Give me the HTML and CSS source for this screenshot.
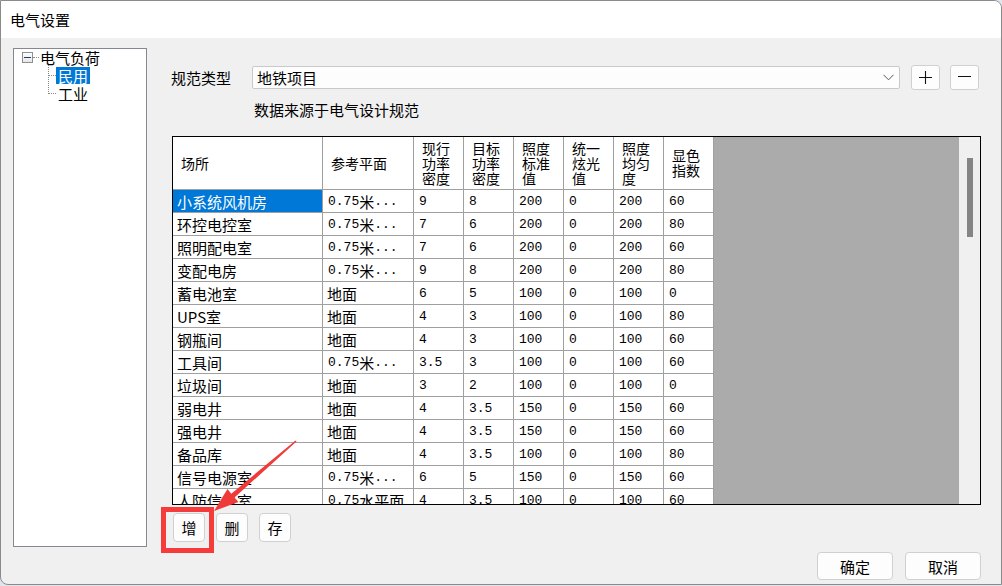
FILE: index.html
```html
<!DOCTYPE html>
<html lang="zh">
<head>
<meta charset="utf-8">
<title>电气设置</title>
<link rel="stylesheet" href="styles.css">
</head>
<body>
<div class="window">
  <div class="titlebar">电气设置</div>
  <div class="content">
    <div class="main">
      <div class="tree">
        <div class="tree-root">
          <span class="expander"></span>
          <span class="dots"></span>
          <span class="root-label">电气负荷</span>
        </div>
        <div class="tree-children">
          <div class="tree-item"><span class="item-label selected">民用</span></div>
          <div class="tree-item"><span class="item-label">工业</span></div>
        </div>
      </div>
      <div class="panel">
        <div class="type-row">
          <span class="type-label">规范类型</span>
          <div class="combo">
            <span>地铁项目</span>
            <svg class="chevron" width="11" height="7" viewBox="0 0 11 7"><path d="M0.5 0.8 L5.5 5.8 L10.5 0.8" fill="none" stroke="#555" stroke-width="1"/></svg>
          </div>
          <button class="sq-btn" aria-label="增加"><svg width="13" height="13" viewBox="0 0 13 13"><path d="M6.5 0 V13 M0 6.5 H13" stroke="#111" stroke-width="1.1"/></svg></button>
          <button class="sq-btn minus" aria-label="删除"><svg width="13" height="13" viewBox="0 0 13 13"><path d="M0 5.5 H13" stroke="#111" stroke-width="1.1"/></svg></button>
        </div>
        <div class="source">数据来源于电气设计规范</div>
        <div class="grid-frame">
          <div class="grid">
            <div class="c hd">场所</div>
            <div class="c hd">参考平面</div>
            <div class="c hd">现行<br>功率<br>密度</div>
            <div class="c hd">目标<br>功率<br>密度</div>
            <div class="c hd">照度<br>标准<br>值</div>
            <div class="c hd">统一<br>炫光<br>值</div>
            <div class="c hd">照度<br>均匀<br>度</div>
            <div class="c hd">显色<br>指数</div>

            <div class="c sel">小系统风机房</div><div class="c m">0.75<span class="cj">米</span>...</div><div class="c m">9</div><div class="c m">8</div><div class="c m">200</div><div class="c m">0</div><div class="c m">200</div><div class="c m">60</div>
            <div class="c">环控电控室</div><div class="c m">0.75<span class="cj">米</span>...</div><div class="c m">7</div><div class="c m">6</div><div class="c m">200</div><div class="c m">0</div><div class="c m">200</div><div class="c m">80</div>
            <div class="c">照明配电室</div><div class="c m">0.75<span class="cj">米</span>...</div><div class="c m">7</div><div class="c m">6</div><div class="c m">200</div><div class="c m">0</div><div class="c m">200</div><div class="c m">60</div>
            <div class="c">变配电房</div><div class="c m">0.75<span class="cj">米</span>...</div><div class="c m">9</div><div class="c m">8</div><div class="c m">200</div><div class="c m">0</div><div class="c m">200</div><div class="c m">80</div>
            <div class="c">蓄电池室</div><div class="c">地面</div><div class="c m">6</div><div class="c m">5</div><div class="c m">100</div><div class="c m">0</div><div class="c m">100</div><div class="c m">0</div>
            <div class="c">UPS室</div><div class="c">地面</div><div class="c m">4</div><div class="c m">3</div><div class="c m">100</div><div class="c m">0</div><div class="c m">100</div><div class="c m">80</div>
            <div class="c">钢瓶间</div><div class="c">地面</div><div class="c m">4</div><div class="c m">3</div><div class="c m">100</div><div class="c m">0</div><div class="c m">100</div><div class="c m">60</div>
            <div class="c">工具间</div><div class="c m">0.75<span class="cj">米</span>...</div><div class="c m">3.5</div><div class="c m">3</div><div class="c m">100</div><div class="c m">0</div><div class="c m">100</div><div class="c m">60</div>
            <div class="c">垃圾间</div><div class="c">地面</div><div class="c m">3</div><div class="c m">2</div><div class="c m">100</div><div class="c m">0</div><div class="c m">100</div><div class="c m">0</div>
            <div class="c">弱电井</div><div class="c">地面</div><div class="c m">4</div><div class="c m">3.5</div><div class="c m">150</div><div class="c m">0</div><div class="c m">150</div><div class="c m">60</div>
            <div class="c">强电井</div><div class="c">地面</div><div class="c m">4</div><div class="c m">3.5</div><div class="c m">150</div><div class="c m">0</div><div class="c m">150</div><div class="c m">60</div>
            <div class="c">备品库</div><div class="c">地面</div><div class="c m">4</div><div class="c m">3.5</div><div class="c m">100</div><div class="c m">0</div><div class="c m">100</div><div class="c m">80</div>
            <div class="c">信号电源室</div><div class="c m">0.75<span class="cj">米</span>...</div><div class="c m">6</div><div class="c m">5</div><div class="c m">150</div><div class="c m">0</div><div class="c m">150</div><div class="c m">60</div>
            <div class="c">人防信号室</div><div class="c m">0.75<span class="cj">水平面</span></div><div class="c m">4</div><div class="c m">3.5</div><div class="c m">100</div><div class="c m">0</div><div class="c m">100</div><div class="c m">60</div>
          </div>
          <div class="grid-empty"></div>
          <div class="vscroll"><div class="thumb"></div></div>
        </div>
        <div class="row-btns">
          <button class="btn small">增</button>
          <button class="btn small">删</button>
          <button class="btn small">存</button>
        </div>
      </div>
    </div>
    <div class="footer">
      <button class="btn wide">确定</button>
      <button class="btn wide">取消</button>
    </div>
  </div>
  <div class="highlight-box"></div>
  <svg class="arrow" width="1002" height="586" viewBox="0 0 1002 586">
    <polygon points="296.5,441.6 234.5,497.5 238.5,502 214,511 227.5,489 231.3,493.7 295.5,440.4" fill="#f03a3a"/>
  </svg>
</div>
</body>
</html>
```

FILE: styles.css
```css
* { box-sizing: border-box; }
html, body { margin: 0; padding: 0; }
body {
  width: 1002px;
  height: 586px;
  background: #dfe6ee;
  font-family: "Noto Sans CJK SC", "Liberation Sans", sans-serif;
  color: #000;
  overflow: hidden;
}
.window {
  position: relative;
  width: 1002px;
  height: 585px;
  background: #f0f0f0;
  border: 1px solid #8a8a8a;
  border-radius: 0 8px 0 8px;
  overflow: hidden;
}
.titlebar {
  height: 37px;
  background: #fff;
  padding-left: 9px;
  font-size: 15px;
  line-height: 37px;
}
.content {
  padding: 10px 20px 0 12px;
}
.main {
  display: flex;
  height: 499px;
}
.tree {
  width: 135px;
  height: 499px;
  background: #fff;
  border: 1px solid #848991;
  padding-top: 0;
  font-size: 15px;
}
.tree-root {
  display: flex;
  align-items: center;
  height: 17px;
  padding-left: 8px;
}
.expander {
  position: relative;
  width: 11px;
  height: 11px;
  border: 1px solid #8f8f8f;
  background: linear-gradient(#fdfdfd, #e8e8e8);
}
.expander::after {
  content: "";
  position: absolute;
  left: 1px;
  right: 1px;
  top: 4px;
  height: 1px;
  background: #1e3a7a;
}
.dots {
  width: 6px;
  border-top: 1px dotted #888;
}
.root-label {
  line-height: 17px;
  padding-left: 1px;
}
.tree-children {
  position: relative;
  margin-left: 34px;
}
.tree-children::before {
  content: "";
  position: absolute;
  left: 0;
  top: -3px;
  height: 29px;
  border-left: 1px dotted #888;
}
.tree-item {
  position: relative;
  height: 18px;
  padding-left: 8px;
  display: flex;
  align-items: center;
}
.tree-item::before {
  content: "";
  position: absolute;
  left: 0;
  top: 9px;
  width: 8px;
  border-top: 1px dotted #888;
}
.item-label {
  padding: 0 2px;
  line-height: 17px;
}
.item-label.selected {
  background: #0078d7;
  color: #fff;
}
.panel {
  margin-left: 24px;
  flex: 1;
  display: flex;
  flex-direction: column;
}
.type-row {
  display: flex;
  align-items: center;
  height: 25px;
  margin-top: 17px;
  margin-right: 2px;
}
.type-label {
  width: 81px;
  font-size: 15px;
}
.combo {
  flex: 1;
  height: 23px;
  background: #fdfdfd;
  border: 1px solid #c9c9c9;
  border-radius: 2px;
  display: flex;
  align-items: center;
  justify-content: space-between;
  padding: 0 5px 0 4px;
  font-size: 15px;
}
.chevron { display: block; }
.sq-btn {
  width: 29px;
  height: 25px;
  margin-left: 11px;
  padding: 0;
  background: #fdfdfd;
  border: 1px solid #d0d0d0;
  border-radius: 3px;
  display: flex;
  align-items: center;
  justify-content: center;
}
.sq-btn.minus { margin-left: 10px; }
.sq-btn svg { display: block; }
.source {
  margin: 10px 0 0 83px;
  height: 20px;
  line-height: 20px;
  font-size: 15px;
}
.grid-frame {
  margin: 16px 0 0 1px;
  width: 809px;
  height: 369px;
  border: 1px solid #000;
  display: flex;
  overflow: hidden;
}
.grid {
  display: grid;
  grid-template-columns: 150px 91px repeat(6, 50px);
  grid-auto-rows: 23px;
  grid-template-rows: 53px;
  align-content: start;
  width: 541px;
  background: #fff;
}
.c {
  border-right: 1px solid #a0a0a0;
  border-bottom: 1px solid #a0a0a0;
  display: flex;
  align-items: center;
  padding-left: 4px;
  white-space: nowrap;
  overflow: hidden;
  font-size: 15px;
  line-height: 17px;
  background: #fff;
}
.c.hd {
  padding-left: 8px;
  font-size: 14px;
  line-height: 15px;
}
.c.sel {
  background: #0078d7;
  color: #fff;
}
.c.m {
  font-family: "Liberation Mono", "Noto Sans CJK SC", monospace;
  font-size: 13px;
  padding-left: 5px;
}
.cj {
  font-family: "Noto Sans CJK SC", sans-serif;
  font-size: 15px;
}
.grid-empty {
  flex: 1;
  background: #ababab;
}
.vscroll {
  width: 21px;
  background: #f0f0f0;
  padding: 21px 0 0 8px;
}
.thumb {
  width: 6px;
  height: 79px;
  background: #858585;
}
.row-btns {
  display: flex;
  gap: 11px;
  margin: 8px 0 0 2px;
}
.btn {
  font-family: "Noto Sans CJK SC", sans-serif;
  font-size: 15px;
  background: #fdfdfd;
  border: 1px solid #d0d0d0;
  border-radius: 4px;
  padding: 0;
  color: #000;
}
.btn.small {
  width: 32px;
  height: 29px;
}
.footer {
  display: flex;
  justify-content: flex-end;
  gap: 12px;
  margin-top: 5px;
}
.btn.wide {
  width: 76px;
  height: 28px;
}
.highlight-box {
  position: absolute;
  left: 160px;
  top: 506px;
  width: 53px;
  height: 46px;
  border: 5px solid #f53b3b;
}
.arrow {
  position: absolute;
  left: -1px;
  top: -1px;
  pointer-events: none;
}
```
